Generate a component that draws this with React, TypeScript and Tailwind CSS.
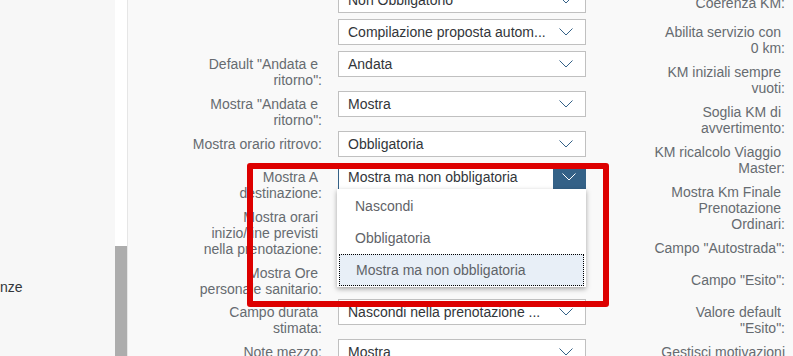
import type { ReactNode } from "react";

interface FieldRow {
  label: string[];
  height: number;
  value?: string;
  focused?: boolean;
}

const leftRows: FieldRow[] = [
  { label: [], height: 32, value: "Non Obbligatorio" },
  { label: [], height: 32, value: "Compilazione proposta autom..." },
  { label: ['Default "Andata e', 'ritorno":'], height: 40, value: "Andata" },
  { label: ['Mostra "Andata e', 'ritorno":'], height: 40, value: "Mostra" },
  { label: ["Mostra orario ritrovo:"], height: 33, value: "Obbligatoria" },
  { label: ["Mostra A", "destinazione:"], height: 40, value: "Mostra ma non obbligatoria", focused: true },
  // these two selects sit under the open listbox
  { label: ["Mostra orari", "inizio/fine previsti", "nella prenotazione:"], height: 56, value: "" },
  { label: ["Mostra Ore", "personale sanitario:"], height: 39, value: "" },
  { label: ["Campo durata", "stimata:"], height: 40, value: "Nascondi nella prenotazione ..." },
  { label: ["Note mezzo:"], height: 40, value: "Mostra" },
];

const rightRows: FieldRow[] = [
  { label: ["Coerenza KM:"], height: 29 },
  { label: ["Abilita servizio con", "0 km:"], height: 40 },
  { label: ["KM iniziali sempre", "vuoti:"], height: 40 },
  { label: ["Soglia KM di", "avvertimento:"], height: 40 },
  { label: ["KM ricalcolo Viaggio", "Master:"], height: 40 },
  { label: ["Mostra Km Finale", "Prenotazione", "Ordinari:"], height: 56 },
  { label: ['Campo "Autostrada":'], height: 32 },
  { label: ['Campo "Esito":'], height: 32 },
  { label: ["Valore default", '"Esito":'], height: 40 },
  { label: ["Gestisci motivazioni"], height: 40 },
];

const options = ["Nascondi", "Obbligatoria", "Mostra ma non obbligatoria"];

function Chevron({ color }: { color: string }) {
  return (
    <svg width="14" height="8" viewBox="0 0 14 8" fill="none">
      <path d="M0.5 0.5 L7 7 L13.5 0.5" stroke={color} strokeWidth="1" />
    </svg>
  );
}

function Label({ lines }: { lines: string[] }) {
  return (
    <div className="pt-[5px] text-right text-[14px] leading-[16px] text-[#666b70]">
      {lines.map((line, index) => (
        <span key={line} className={index < lines.length - 1 ? "block pr-[4px]" : "block"}>
          {line}
        </span>
      ))}
    </div>
  );
}

function Select({ value, focused }: { value: string; focused?: boolean }): ReactNode {
  return (
    <div
      className={`flex h-[26px] w-[248px] shrink-0 items-center border bg-white ${
        focused ? "border-[#346187]" : "border-[#c0c0c0]"
      }`}
    >
      <span className="flex-1 truncate pl-[9px] text-[14px] text-[#32363a]">{value}</span>
      {focused ? (
        <span className="flex h-full w-[32px] items-center justify-center bg-[#346187]">
          <Chevron color="#ffffff" />
        </span>
      ) : (
        <span className="flex h-full w-[32px] items-center justify-center pr-[6px]">
          <Chevron color="#346187" />
        </span>
      )}
    </div>
  );
}

export default function App() {
  return (
    <div
      className="relative flex h-[356px] w-[793px] overflow-hidden bg-[#f7f7f7]"
      style={{ fontFamily: '"Liberation Sans", Arial, sans-serif' }}
    >
      <aside className="flex w-[115px] shrink-0 flex-col bg-[#f7f7f7]">
        <div className="mt-[277px] text-[14px] leading-[20px] text-[#32363a]">nze</div>
      </aside>

      <div className="flex w-[12px] shrink-0 flex-col bg-white">
        <div className="h-[246px] shrink-0" />
        <div className="flex-1 bg-[#adadad]" />
      </div>
      <div className="w-px shrink-0 bg-[#e6e6e6]" />

      <main className="flex flex-1 items-start bg-[#f9f9f9]">
        <section className="-mt-[13px] flex w-[458px] shrink-0 flex-col">
          {leftRows.map((row, index) => (
            <div key={index} className="flex shrink-0 gap-[16px]" style={{ height: row.height }}>
              <div className="w-[194px] shrink-0">
                <Label lines={row.label} />
              </div>
              {row.value !== undefined ? <Select value={row.value} focused={row.focused} /> : null}
            </div>
          ))}
        </section>

        <section className="-mt-[10px] flex w-[199px] shrink-0 flex-col">
          {rightRows.map((row, index) => (
            <div key={index} className="shrink-0" style={{ height: row.height }}>
              <Label lines={row.label} />
            </div>
          ))}
        </section>
      </main>

      {/* open listbox of the focused select */}
      <div className="absolute left-[337px] top-[189px] flex w-[249px] flex-col bg-white py-px shadow-[0_2px_5px_rgba(0,0,0,0.35)]">
        {options.map((option, index) => (
          <div
            key={option}
            className={`mx-[2px] flex h-[32px] items-center pl-[16px] text-[14px] text-[#5f6368] ${
              index === options.length - 1 ? "border border-dotted border-black bg-[#e8eff7]" : ""
            }`}
          >
            {option}
          </div>
        ))}
      </div>

      {/* red highlight drawn over the screenshot */}
      <div className="pointer-events-none absolute left-[247px] top-[163px] h-[144px] w-[362px] rounded-[3px] border-[6px] border-[#dd0000]" />
    </div>
  );
}
